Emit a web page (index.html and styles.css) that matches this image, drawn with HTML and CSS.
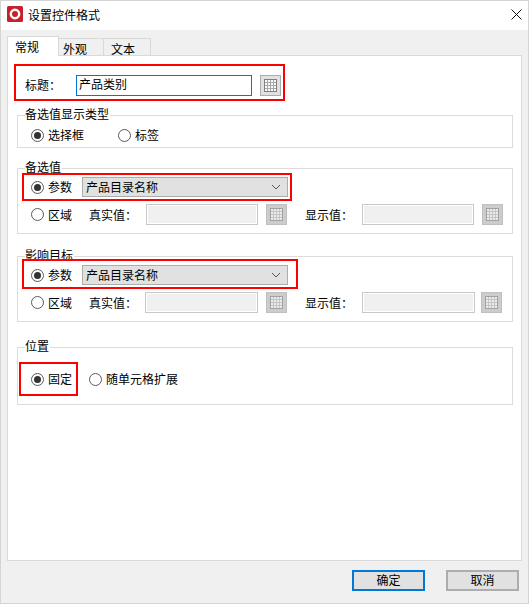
FILE: index.html
```html
<!DOCTYPE html>
<html lang="zh-CN">
<head>
<meta charset="utf-8">
<title>设置控件格式</title>
<link rel="stylesheet" href="styles.css">
</head>
<body>
<svg class="defs" aria-hidden="true">
  <symbol id="grid" viewBox="0 0 13 13">
    <rect class="g-cell" x="0" y="0" width="13" height="13"/>
    <path class="g-line" d="M0 3.5H13M0 6.5H13M0 9.5H13M3.5 0V13M6.5 0V13M9.5 0V13"/>
    <rect class="g-frame" x="0.5" y="0.5" width="12" height="12"/>
  </symbol>
  <symbol id="chev" viewBox="0 0 10 6">
    <path d="M1 1L5 5L9 1" fill="none" stroke="#555" stroke-width="1"/>
  </symbol>
</svg>
<div class="window">
  <header class="titlebar">
    <svg class="logo" viewBox="0 0 16 16"><rect width="16" height="16" rx="1.5" fill="#c8202b"/><circle cx="8" cy="8" r="4.2" fill="none" stroke="#fff" stroke-width="2.4"/></svg>
    <span class="title">设置控件格式</span>
    <svg class="close" viewBox="0 0 11 11"><path d="M.5 .5L10.5 10.5M10.5 .5L.5 10.5" stroke="#111" stroke-width="1" fill="none"/></svg>
  </header>
  <div class="body">
    <nav class="tabs">
      <span class="tab tab-active">常规</span>
      <span class="tab tab-look">外观</span>
      <span class="tab tab-text">文本</span>
    </nav>
    <main class="pane">
      <div class="mark mark-title">
        <span class="title-label">标题：</span>
        <span class="field-title">产品类别</span>
        <button class="grid-btn grid-on"><svg class="grid-ic"><use href="#grid"/></svg></button>
      </div>

      <section class="group group-type">
        <div class="legend">备选值显示类型</div>
        <div class="row row-type">
          <span class="radio radio-on"></span><span class="opt">选择框</span>
          <span class="radio radio-next"></span><span class="opt">标签</span>
        </div>
      </section>

      <section class="group group-values">
        <div class="legend">备选值</div>
        <div class="mark mark-param mark-a">
          <span class="radio radio-on"></span><span class="opt">参数</span>
          <div class="select"><span>产品目录名称</span><svg class="chev"><use href="#chev"/></svg></div>
        </div>
        <div class="row row-range">
          <span class="radio"></span><span class="opt">区域</span>
          <span class="lbl lbl-real">真实值：</span>
          <span class="off"></span>
          <button class="grid-btn"><svg class="grid-ic"><use href="#grid"/></svg></button>
          <span class="lbl lbl-show">显示值：</span>
          <span class="off"></span>
          <button class="grid-btn"><svg class="grid-ic"><use href="#grid"/></svg></button>
        </div>
      </section>

      <section class="group group-target">
        <div class="legend">影响目标</div>
        <div class="mark mark-param mark-b">
          <span class="radio radio-on"></span><span class="opt">参数</span>
          <div class="select"><span>产品目录名称</span><svg class="chev"><use href="#chev"/></svg></div>
        </div>
        <div class="row row-range row-wide">
          <span class="radio"></span><span class="opt">区域</span>
          <span class="lbl lbl-real">真实值：</span>
          <span class="off"></span>
          <button class="grid-btn"><svg class="grid-ic"><use href="#grid"/></svg></button>
          <span class="lbl lbl-show">显示值：</span>
          <span class="off"></span>
          <button class="grid-btn"><svg class="grid-ic"><use href="#grid"/></svg></button>
        </div>
      </section>

      <section class="group group-pos">
        <div class="legend">位置</div>
        <div class="row row-pos">
          <div class="mark mark-fixed">
            <span class="radio radio-on"></span><span class="opt">固定</span>
          </div>
          <span class="radio"></span><span class="opt">随单元格扩展</span>
        </div>
      </section>
    </main>
    <footer class="footer">
      <button class="btn btn-primary">确定</button>
      <button class="btn">取消</button>
    </footer>
  </div>
</div>
</body>
</html>
```
FILE: styles.css
```css
* { box-sizing: border-box; }
html, body { margin: 0; padding: 0; }
body {
  width: 529px;
  height: 604px;
  overflow: hidden;
  font-family: "Noto Sans CJK SC", "Liberation Sans", sans-serif;
  font-size: 12px;
  line-height: 16px;
  color: #000;
  background: #fff;
}
.defs { width: 0; height: 0; display: block; }
.window {
  width: 529px;
  height: 604px;
  border: 1px solid #d4d4d4;
  display: flex;
  flex-direction: column;
}
.titlebar {
  height: 29px;
  flex: none;
  display: flex;
  align-items: center;
  padding: 0 6px 3px;
  background: #fff;
}
.logo { width: 16px; height: 16px; flex: none; }
.title { margin: 2px 0 0 5px; flex: 1; line-height: 14px; }
.close { width: 11px; height: 11px; flex: none; }
.body {
  flex: 1;
  min-height: 0;
  display: flex;
  flex-direction: column;
  padding: 6px 6px 0;
  background: #f0f0f0;
}
.tabs { display: flex; height: 20px; margin-bottom: -1px; flex: none; align-items: flex-end; }
.tab {
  height: 18px;
  border: 1px solid #d9d9d9;
  border-left: 0;
  background: #f0f0f0;
  line-height: 19px;
}
.tab-active {
  width: 52px;
  height: 20px;
  padding-left: 7px;
  border-left: 1px solid #d9d9d9;
  border-bottom: 0;
  background: #fff;
  line-height: 20px;
  position: relative;
  z-index: 1;
}
.tab-look { width: 45px; padding-left: 4px; }
.tab-text { width: 47px; padding-left: 7px; }
.pane {
  flex: 1;
  min-height: 0;
  background: #fff;
  border: 1px solid #d9d9d9;
  padding-top: 8px;
}
.mark {
  border: 2px solid #f00;
  display: flex;
  align-items: center;
  width: fit-content;
  position: relative;
}
.mark-title {
  margin-left: 6px;
  height: 37px;
  padding: 6px 2px 0 9px;
}
.title-label { width: 51px; flex: none; margin-bottom: 2px; }
.field-title {
  width: 176px;
  height: 21px;
  border: 1px solid #0078d7;
  background: #fff;
  padding-left: 2px;
  line-height: 16px;
}
.grid-btn {
  width: 21px;
  height: 21px;
  flex: none;
  margin: 0 0 0 8px;
  padding: 0;
  border: 1px solid #c0c0c0;
  background: #cccccc;
  display: flex;
  align-items: center;
  justify-content: center;
  --cell: #ececec;
  --line: #c4c4c4;
  --frame: #a0a0a0;
}
.grid-on {
  background: #e1e1e1;
  border-color: #adadad;
  --cell: #fafafa;
  --line: #a8a8a8;
  --frame: #808080;
}
.grid-ic { width: 13px; height: 13px; display: block; }
.g-cell { fill: var(--cell); }
.g-line { fill: none; stroke: var(--line); stroke-width: 1; }
.g-frame { fill: none; stroke: var(--frame); stroke-width: 1; }
.group {
  margin: 0 8px 0 9px;
  border: 1px solid #dcdcdc;
}
.legend {
  width: fit-content;
  height: 16px;
  margin: -10px 0 -6px 7px;
  padding: 0 1px 0 0;
  background: #fff;
}
.group-type { margin-top: 14px; height: 33px; }
.group-values { margin-top: 20px; height: 66px; }
.group-target { margin-top: 22px; height: 66px; }
.group-pos { margin-top: 25px; height: 58px; }
.row { display: flex; align-items: center; }
.row-type { height: 20px; margin-top: 9px; padding-left: 13px; }
.radio {
  width: 13px;
  height: 13px;
  flex: none;
  border: 1px solid #5a5a5a;
  border-radius: 50%;
  background: #fff;
  position: relative;
  margin-right: 4px;
}
.radio-on::after {
  content: "";
  position: absolute;
  left: 2px;
  top: 2px;
  width: 7px;
  height: 7px;
  border-radius: 50%;
  background: #333;
}
.radio-next { margin-left: 34px; }
.mark-param { margin-left: 4px; padding-left: 7px; }
.mark-a { margin-top: 4px; height: 28px; padding-right: 2px; }
.mark-b { margin-top: 2px; height: 30px; padding: 2px 8px 0 7px; }
.select {
  width: 206px;
  height: 20px;
  margin-left: 10px;
  border: 1px solid #adadad;
  background: #e1e1e1;
  padding: 0 6px 0 3px;
  display: flex;
  align-items: center;
  justify-content: space-between;
}
.chev { width: 10px; height: 6px; display: block; }
.row-range { margin-top: 3px; height: 21px; padding-left: 13px; }
.lbl { flex: none; width: 57px; }
.lbl-real { margin-left: 17px; }
.lbl-show { margin-left: 18px; }
.off {
  flex: none;
  width: 112px;
  height: 21px;
  border: 1px solid #c8c8c8;
  background: #f0f0f0;
  box-shadow: inset 0 0 0 1px #fff;
}
.row-wide .lbl-real { width: 56px; }
.row-wide .off { width: 113px; }
.row-wide .lbl-show ~ .off + .grid-btn { margin-left: 6px; }
.row-pos { margin-top: 14px; height: 34px; padding-left: 1px; }
.mark-fixed {
  height: 34px;
  padding: 0 4px 0 10px;
  margin-right: 11px;
}
.footer {
  flex: none;
  height: 42px;
  display: flex;
  justify-content: flex-end;
  gap: 21px;
  padding: 9px 3px 0 0;
}
.btn {
  width: 73px;
  height: 21px;
  padding: 0 0 2px;
  border: 2px solid #adadad;
  background: #e1e1e1;
  font: inherit;
  color: #000;
}
.btn-primary { border-color: #0078d7; }
```
